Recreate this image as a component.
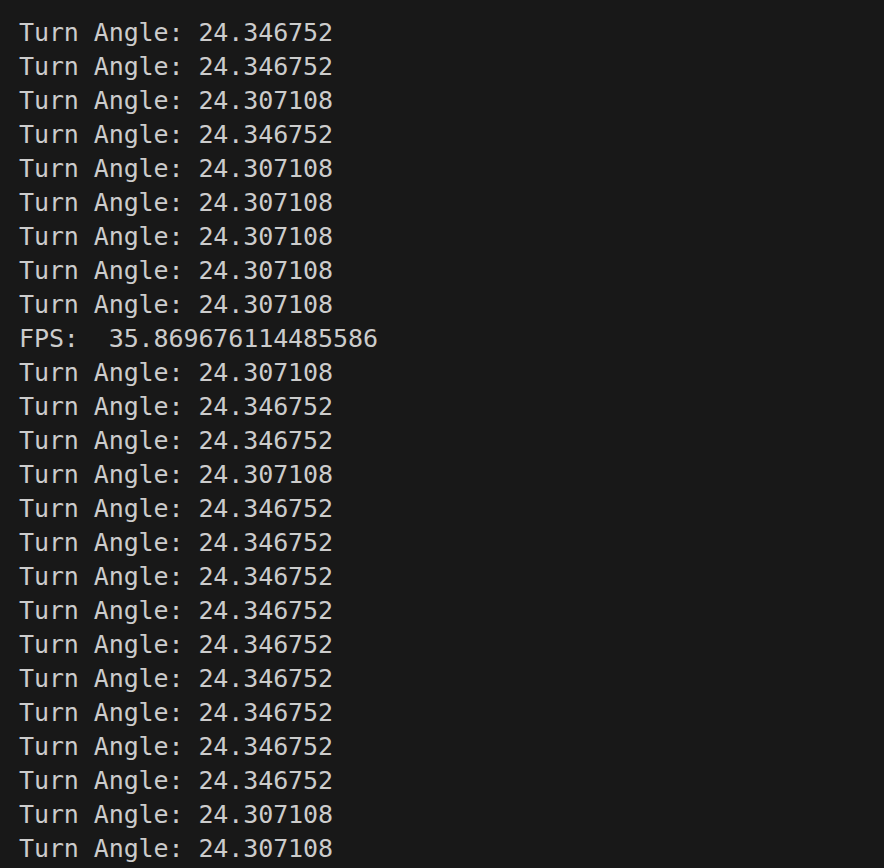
import React from "react";

const lines = [
  "Turn Angle: 24.346752",
  "Turn Angle: 24.346752",
  "Turn Angle: 24.307108",
  "Turn Angle: 24.346752",
  "Turn Angle: 24.307108",
  "Turn Angle: 24.307108",
  "Turn Angle: 24.307108",
  "Turn Angle: 24.307108",
  "Turn Angle: 24.307108",
  "FPS:  35.869676114485586",
  "Turn Angle: 24.307108",
  "Turn Angle: 24.346752",
  "Turn Angle: 24.346752",
  "Turn Angle: 24.307108",
  "Turn Angle: 24.346752",
  "Turn Angle: 24.346752",
  "Turn Angle: 24.346752",
  "Turn Angle: 24.346752",
  "Turn Angle: 24.346752",
  "Turn Angle: 24.346752",
  "Turn Angle: 24.346752",
  "Turn Angle: 24.346752",
  "Turn Angle: 24.346752",
  "Turn Angle: 24.307108",
  "Turn Angle: 24.307108",
];

export default function App() {
  return (
    <div className="w-[884px] h-[868px] overflow-hidden bg-[#181818] pl-[19px] pt-[16px] font-['DejaVu_Sans_Mono',monospace] text-[25px] leading-[34px] tracking-[-0.1px] text-[#cccccc]">
      {lines.map((l, i) => (
        <div key={i} className="whitespace-pre">
          {l}
        </div>
      ))}
    </div>
  );
}
